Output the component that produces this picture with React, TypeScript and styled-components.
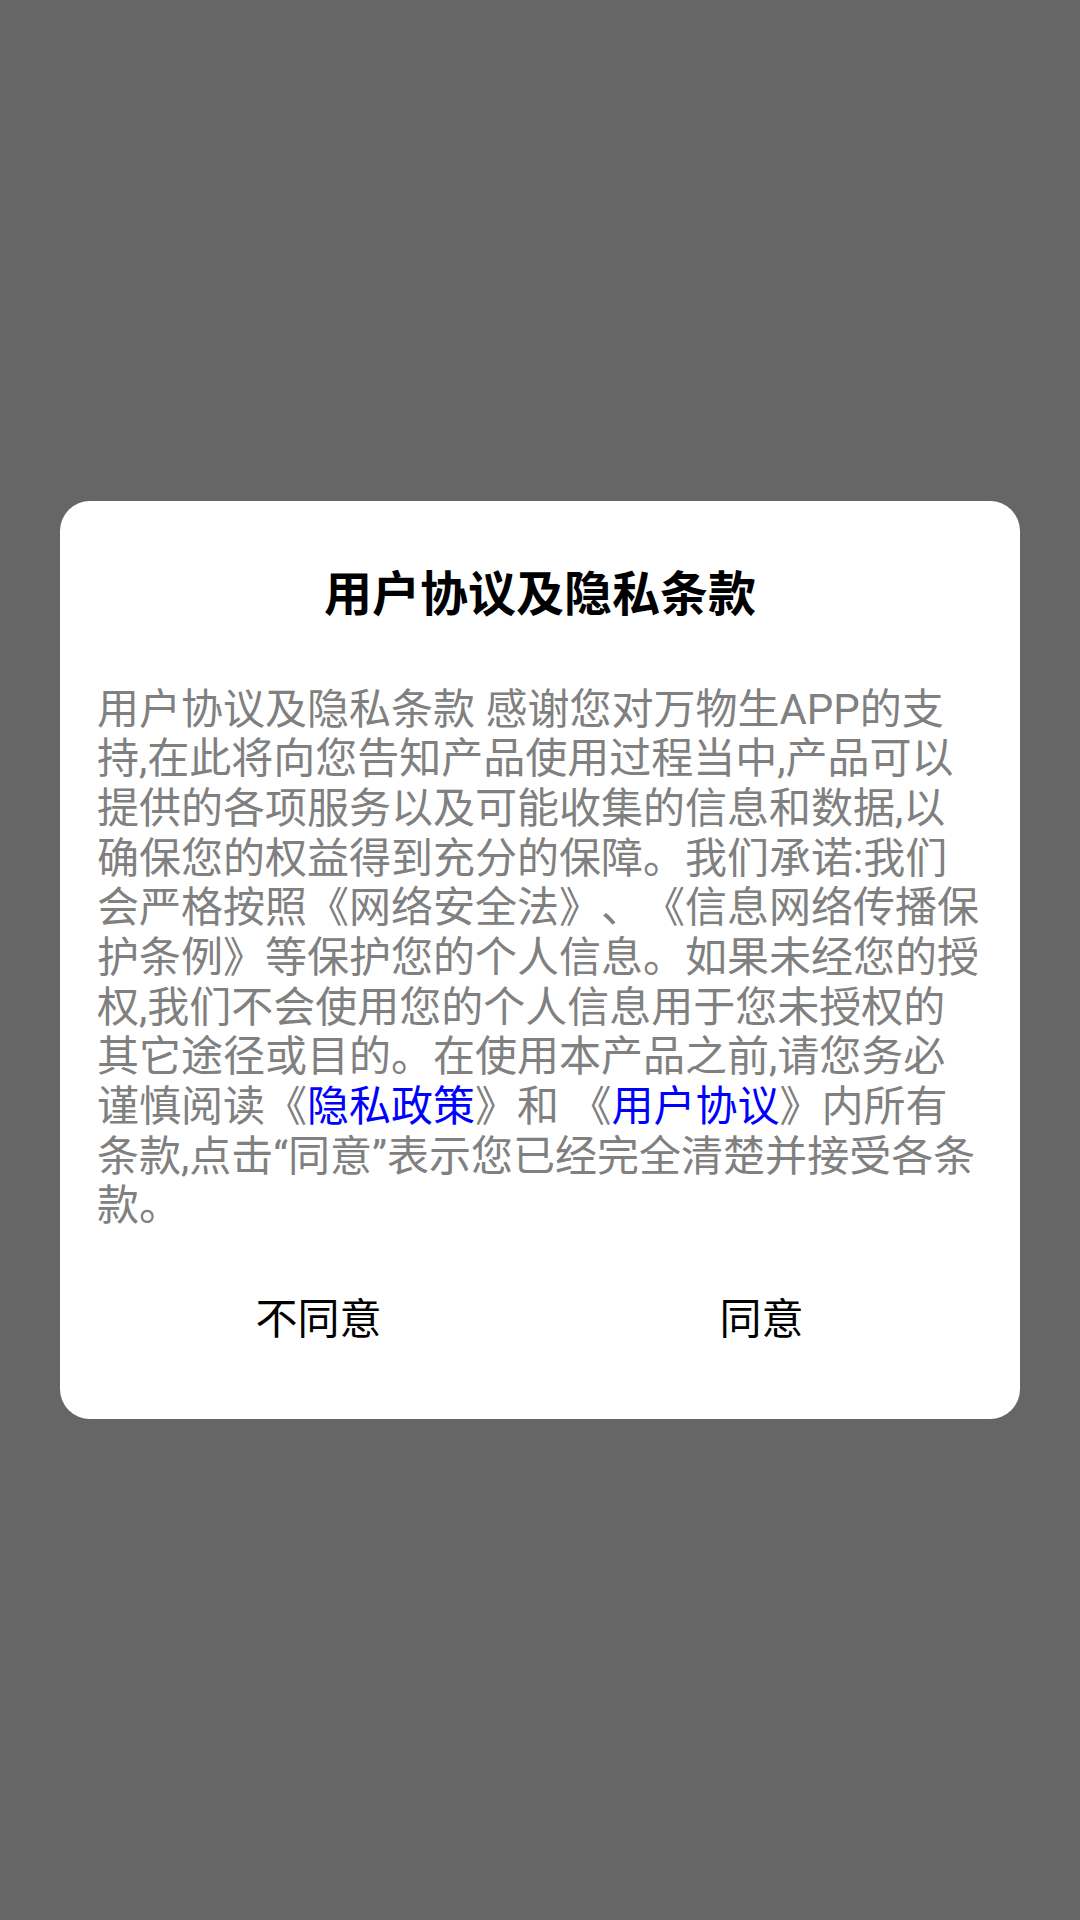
import React from "react";
import styled, { createGlobalStyle } from "styled-components";

const GlobalStyle = createGlobalStyle`
  html, body {
    margin: 0;
    padding: 0;
    background: #666666;
  }
  * { box-sizing: border-box; }
`;

const Overlay = styled.div`
  width: 1080px;
  height: 1920px;
  background: #666666;
  display: flex;
  align-items: center;
  justify-content: center;
  font-family: Roboto, "Noto Sans CJK SC", sans-serif;
`;

const Dialog = styled.div`
  width: 960px;
  background: #ffffff;
  border-radius: 30px;
  padding: 55px 37px 53px;
  display: flex;
  flex-direction: column;
`;

const Title = styled.h1`
  margin: 0 0 59px;
  font-family: "Noto Sans CJK SC", sans-serif;
  font-size: 48px;
  font-weight: 700;
  line-height: 69.5px;
  color: #000000;
  text-align: center;
`;

const Body = styled.p`
  margin: 0 0 35px;
  font-size: 42px;
  line-height: 49.66px;
  color: #808080;
  text-align: left;
  text-spacing-trim: space-all;
  font-feature-settings: "halt" 0, "chws" 0;
`;

const Link = styled.span`
  color: #0000ff;
`;

const Actions = styled.div`
  display: flex;
  height: 100px;
`;

const ActionButton = styled.button`
  flex: 1;
  border: none;
  background: transparent;
  padding: 0;
  font-family: Roboto, "Noto Sans CJK SC", sans-serif;
  font-size: 42px;
  color: #000000;
  display: flex;
  align-items: center;
  justify-content: center;
  cursor: pointer;
`;

export default function App() {
  return (
    <>
      <GlobalStyle />
      <Overlay>
        <Dialog>
          <Title>用户协议及隐私条款</Title>
          <Body>
            用户协议及隐私条款 感谢您对万物生APP的支持,在此将向您告知产品使用过程当中,产品可以提供的各项服务以及可能收集的信息和数据,以确保您的权益得到充分的保障。我们承诺:我们会严格按照《网络安全法》、《信息网络传播保护条例》等保护您的个人信息。如果未经您的授权,我们不会使用您的个人信息用于您未授权的其它途径或目的。在使用本产品之前,请您务必谨慎阅读《
            <Link>隐私政策</Link>》和 《<Link>用户协议</Link>》内所有条款,点击“同意”表示您已经完全清楚并接受各条款。
          </Body>
          <Actions>
            <ActionButton>不同意</ActionButton>
            <ActionButton>同意</ActionButton>
          </Actions>
        </Dialog>
      </Overlay>
    </>
  );
}
